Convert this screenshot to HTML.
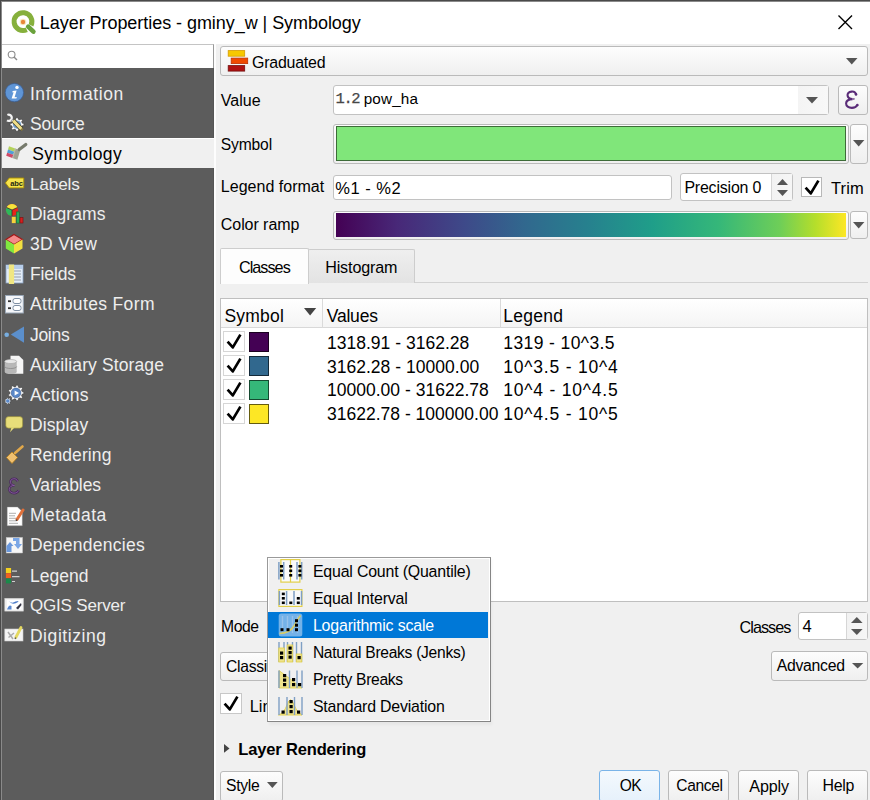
<!DOCTYPE html><html><head><meta charset="utf-8"><style>
html,body{margin:0;padding:0;width:870px;height:800px;overflow:hidden;background:#f0f0f0;}
body{position:relative;font-family:"Liberation Sans",sans-serif;}
.t{position:absolute;line-height:0;white-space:pre;font-family:"Liberation Sans",sans-serif;}
svg{overflow:visible}
</style></head><body>
<div style="position:absolute;left:0px;top:0px;width:870px;height:44px;background:#fff"></div>
<div style="position:absolute;left:0px;top:0px;width:870px;height:1px;background:#4a4a4a"></div>
<div style="position:absolute;left:0px;top:1px;width:870px;height:1px;background:#8a8a8a"></div>
<div style="position:absolute;left:0px;top:0px;width:1px;height:800px;background:#4a4a4a"></div>
<div style="position:absolute;left:1px;top:1px;width:1px;height:799px;background:#8a8a8a"></div>
<svg style="position:absolute;left:10px;top:9px" width="27" height="26" viewBox="0 0 27 26">
<path d="M16.76 20.67 A8.9 8.9 0 1 1 21.07 16.36" fill="none" stroke="#86b03c" stroke-width="5"/>
<path d="M18.2 17.6 L23.4 22.6" stroke="#6aa23c" stroke-width="4.6" stroke-linecap="round"/>
<circle cx="13" cy="13" r="3.3" fill="#f4dc9a" opacity="0.6"/>
<circle cx="13" cy="13" r="2.2" fill="#e8883a"/>
</svg>
<div class="t" style="left:39.80px;top:22.96px;font-size:18px;color:#000;font-weight:normal;letter-spacing:-0.049px;">Layer Properties - gminy_w &#124; Symbology</div>
<svg style="position:absolute;left:838px;top:15px" width="15" height="15" viewBox="0 0 15 15"><path d="M0.5 0.5 L14 14 M14 0.5 L0.5 14" stroke="#000" stroke-width="1.4"/></svg>
<div style="position:absolute;left:2px;top:44px;width:212px;height:24px;background:#fff;border-top:1px solid #c4c4c4;border-right:1px solid #9a9a9a;box-sizing:border-box"></div>
<svg style="position:absolute;left:7px;top:50px" width="12" height="12" viewBox="0 0 12 12"><circle cx="4.6" cy="4.6" r="3.4" fill="none" stroke="#8a8a8a" stroke-width="1.1"/><path d="M7 7 L10 10" stroke="#8a8a8a" stroke-width="1.4"/></svg>
<div style="position:absolute;left:2px;top:68px;width:212px;height:732px;background:#5c5c5c"></div>
<div style="position:absolute;left:213px;top:68px;width:1px;height:732px;background:#555"></div>
<div style="position:absolute;left:214px;top:44px;width:2px;height:756px;background:#fdfdfd"></div>
<div style="position:absolute;left:2px;top:138px;width:212px;height:30px;background:#f0f0f0;border-top:1px solid #fff;box-sizing:border-box"></div>
<div class="t" style="left:29.90px;top:93.64px;font-size:17.5px;color:#eeeeee;font-weight:normal;letter-spacing:0.575px;">Information</div>
<div class="t" style="left:29.90px;top:123.76px;font-size:17.5px;color:#eeeeee;font-weight:normal;letter-spacing:-0.131px;">Source</div>
<div class="t" style="left:32.20px;top:153.88px;font-size:17.5px;color:#000;font-weight:normal;letter-spacing:0.365px;">Symbology</div>
<div class="t" style="left:29.90px;top:184.11px;font-size:17.18px;color:#eeeeee;font-weight:normal;letter-spacing:-0.125px;">Labels</div>
<div class="t" style="left:29.90px;top:214.12px;font-size:17.5px;color:#eeeeee;font-weight:normal;letter-spacing:0.087px;">Diagrams</div>
<div class="t" style="left:29.90px;top:244.24px;font-size:17.5px;color:#eeeeee;font-weight:normal;letter-spacing:0.340px;">3D View</div>
<div class="t" style="left:29.90px;top:274.36px;font-size:17.5px;color:#eeeeee;font-weight:normal;letter-spacing:-0.097px;">Fields</div>
<div class="t" style="left:29.90px;top:304.48px;font-size:17.5px;color:#eeeeee;font-weight:normal;letter-spacing:0.355px;">Attributes Form</div>
<div class="t" style="left:29.90px;top:334.60px;font-size:17.5px;color:#eeeeee;font-weight:normal;letter-spacing:-0.265px;">Joins</div>
<div class="t" style="left:29.90px;top:364.72px;font-size:17.5px;color:#eeeeee;font-weight:normal;letter-spacing:0.106px;">Auxiliary Storage</div>
<div class="t" style="left:29.90px;top:394.84px;font-size:17.5px;color:#eeeeee;font-weight:normal;letter-spacing:0.202px;">Actions</div>
<div class="t" style="left:29.90px;top:424.96px;font-size:17.5px;color:#eeeeee;font-weight:normal;letter-spacing:0.152px;">Display</div>
<div class="t" style="left:29.90px;top:455.08px;font-size:17.5px;color:#eeeeee;font-weight:normal;letter-spacing:0.094px;">Rendering</div>
<div class="t" style="left:29.90px;top:485.20px;font-size:17.5px;color:#eeeeee;font-weight:normal;letter-spacing:-0.059px;">Variables</div>
<div class="t" style="left:29.90px;top:515.32px;font-size:17.5px;color:#eeeeee;font-weight:normal;letter-spacing:0.490px;">Metadata</div>
<div class="t" style="left:29.90px;top:545.44px;font-size:17.5px;color:#eeeeee;font-weight:normal;letter-spacing:0.264px;">Dependencies</div>
<div class="t" style="left:29.90px;top:575.56px;font-size:17.5px;color:#eeeeee;font-weight:normal;letter-spacing:0.039px;">Legend</div>
<div class="t" style="left:29.90px;top:605.84px;font-size:17.03px;color:#eeeeee;font-weight:normal;letter-spacing:-0.176px;">QGIS Server</div>
<div class="t" style="left:29.90px;top:635.80px;font-size:17.5px;color:#eeeeee;font-weight:normal;letter-spacing:0.578px;">Digitizing</div>
<svg style="position:absolute;left:2px;top:80px" width="28" height="28" viewBox="0 0 28 28">
<circle cx="12.4" cy="12.6" r="9.2" fill="#5f95d6" stroke="#3c5f94" stroke-width="0.8"/>
<circle cx="15.0" cy="7.4" r="1.7" fill="#fff"/>
<path d="M10.6 11 L14.6 10.6 L12.6 17.2 L14.8 17 L14.4 18.4 L9.6 18.6 L11.6 12.2 L10.4 12.4 Z" fill="#fff"/>
</svg>
<svg style="position:absolute;left:2px;top:110px" width="28" height="28" viewBox="0 0 28 28">
<path d="M5.4 5.0 A3.1 3.1 0 1 1 5.0 10.4" fill="none" stroke="#f4f4f4" stroke-width="2.3"/>
<path d="M9.2 9.6 L12 12.4" stroke="#f4f4f4" stroke-width="2.2"/>
<polygon points="20.25,13.24 21.84,13.58 21.84,15.42 20.25,15.76 19.60,17.32 20.49,18.69 19.19,19.99 17.82,19.10 16.26,19.75 15.92,21.34 14.08,21.34 13.74,19.75 12.18,19.10 10.81,19.99 9.51,18.69 10.40,17.32 9.75,15.76 8.16,15.42 8.16,13.58 9.75,13.24 10.40,11.68 9.51,10.31 10.81,9.01 12.18,9.90 13.74,9.25 14.08,7.66 15.92,7.66 16.26,9.25 17.82,9.90 19.19,9.01 20.49,10.31 19.60,11.68" fill="#fbfbfb" stroke="#333" stroke-width="0.5"/>
<circle cx="15" cy="14.6" r="4.1" fill="#7aa4d0"/>
<path d="M11 10.4 L19.6 19.2" stroke="#3a3a2a" stroke-width="4.6" stroke-linecap="butt"/>
<path d="M11.2 10.6 L19.4 19.0" stroke="#eedd88" stroke-width="3.2" stroke-linecap="butt"/>
<path d="M19.4 19.0 L20.6 20.2" stroke="#8a7a3a" stroke-width="2.4"/>
</svg>
<svg style="position:absolute;left:2px;top:140px" width="28" height="28" viewBox="0 0 28 28"><polygon points="7.00,6.20 13.16,8.40 12.21,11.66 6.05,9.46" fill="#b4d25a"/><polygon points="6.05,9.46 12.21,11.66 11.28,14.83 5.12,12.63" fill="#4f9fd8"/><polygon points="5.12,12.63 11.28,14.83 10.36,18.00 4.20,15.80" fill="#cf4a68"/><polygon points="13.16,8.40 18.20,10.20 15.40,19.80 10.36,18.00" fill="#9ea292"/><polygon points="13.16,8.40 13.94,8.68 11.14,18.28 10.36,18.00" fill="#b9bcae"/><path d="M17.2 9.6 L23.8 4.4" stroke="#767a6c" stroke-width="3.2" stroke-linecap="round"/></svg>
<svg style="position:absolute;left:2px;top:170px" width="28" height="28" viewBox="0 0 28 28">
<path d="M3.4 12.9 L7.2 8 L21.8 8 L21.8 17.9 L7.2 17.9 Z" fill="#f6e34c" stroke="#a88c00" stroke-width="0.9"/>
<text x="8.2" y="15.6" font-family="Liberation Sans" font-weight="bold" font-size="7.6" fill="#2a2a10" letter-spacing="-0.2">abc</text>
</svg>
<svg style="position:absolute;left:2px;top:200px" width="28" height="28" viewBox="0 0 28 28">
<circle cx="10" cy="10" r="6" fill="#e8241a"/>
<path d="M10 10 L4.5 7.5 A6 6 0 0 1 15.5 7.5 Z" fill="#f7e43a"/>
<path d="M10 10 L4.5 7.5 A6 6 0 0 0 10 16 Z" fill="#2eb85a"/>
<path d="M10 10 L4.5 7.5 M10 10 L15.5 7.5 M10 10 L10 16" stroke="#333" stroke-width="0.8"/>
<rect x="9.8" y="16.8" width="3.9" height="6.3" fill="#f6d23a"/>
<rect x="14.4" y="11.9" width="3.1" height="11.2" fill="#2aac58" stroke="#1d6a35" stroke-width="0.6"/>
<rect x="18" y="17.5" width="3" height="5.5" fill="#d41f1f" stroke="#7a1010" stroke-width="0.6"/>
</svg>
<svg style="position:absolute;left:2px;top:231px" width="28" height="28" viewBox="0 0 28 28">
<path d="M12 3.5 L20.5 8.5 L12 13.5 L3.8 8.5 Z" fill="#f48a8a" stroke="#a01818" stroke-width="1.1"/>
<path d="M3.8 8.5 L12 13.5 L12 22.5 L3.8 17.5 Z" fill="#80e840"/>
<path d="M20.5 8.5 L12 13.5 L12 22.5 L20.5 17.5 Z" fill="#f2e040"/>
</svg>
<svg style="position:absolute;left:2px;top:261px" width="28" height="28" viewBox="0 0 28 28">
<rect x="4" y="4" width="17" height="18" fill="#e2ecf8" stroke="#8aa4c4" stroke-width="0.8"/>
<rect x="4" y="4" width="17" height="4" fill="#b7cdea"/>
<path d="M12 10 H19 M12 13 H19 M12 16 H19 M12 19 H19" stroke="#8c96a4" stroke-width="0.9"/>
<rect x="6.8" y="3.5" width="5.3" height="19.5" fill="#f0e682"/>
</svg>
<svg style="position:absolute;left:2px;top:291px" width="28" height="28" viewBox="0 0 28 28">
<rect x="3.5" y="4.5" width="17.8" height="17.5" fill="#f4f6fa" stroke="#9aa8b8" stroke-width="1"/>
<rect x="11" y="7.5" width="8" height="5" rx="2" fill="#fff" stroke="#8090a4" stroke-width="1"/>
<rect x="11" y="14.5" width="8" height="5" rx="2" fill="#fff" stroke="#8090a4" stroke-width="1"/>
<rect x="6" y="9.3" width="3" height="1.8" fill="#333"/>
<rect x="6" y="16.3" width="3" height="1.8" fill="#333"/>
</svg>
<svg style="position:absolute;left:2px;top:321px" width="28" height="28" viewBox="0 0 28 28">
<circle cx="4.7" cy="13.8" r="2.3" fill="#78aee0"/>
<path d="M8.8 13.6 L22 5.6 L22 21.7 Z" fill="#5b8fcc"/>
</svg>
<svg style="position:absolute;left:2px;top:351px" width="28" height="28" viewBox="0 0 28 28">
<path d="M8.5 4.8 H17 L21.3 9 V22.7 H8.5 Z" fill="#f6f6f6"/>
<ellipse cx="8.7" cy="10.5" rx="6" ry="2" fill="#e6e6e6"/>
<path d="M2.7 10.5 V21 A6 2 0 0 0 14.7 21 V10.5 Z" fill="#b8b8b8"/>
<path d="M2.7 15.5 A6 2 0 0 0 14.7 15.5" stroke="#888" stroke-width="0.8" fill="none"/>
<ellipse cx="8.7" cy="10.5" rx="6" ry="2" fill="#e8e8e8" stroke="#999" stroke-width="0.5"/>
</svg>
<svg style="position:absolute;left:2px;top:381px" width="28" height="28" viewBox="0 0 28 28"><polygon points="20.06,10.61 21.75,10.98 21.75,12.82 20.06,13.19 19.47,14.81 20.53,16.17 19.34,17.59 17.82,16.79 16.32,17.65 16.25,19.37 14.44,19.69 13.78,18.10 12.08,17.80 10.93,19.07 9.33,18.15 9.85,16.51 8.74,15.19 7.04,15.42 6.41,13.68 7.86,12.76 7.86,11.04 6.41,10.12 7.04,8.38 8.74,8.61 9.85,7.29 9.33,5.65 10.93,4.73 12.08,6.00 13.78,5.70 14.44,4.11 16.25,4.43 16.32,6.15 17.82,7.01 19.34,6.21 20.53,7.63 19.47,8.99" fill="#fafafa" stroke="#333" stroke-width="0.5"/>
<circle cx="14" cy="11.9" r="4.8" fill="#5a88c8" stroke="#3a5a90" stroke-width="0.6"/>
<path d="M12.6 9.4 L17 11.9 L12.6 14.4 Z" fill="#fff"/>
<polygon points="8.31,19.31 9.16,19.48 9.16,20.52 8.31,20.69 7.90,21.53 8.30,22.31 7.49,22.95 6.82,22.39 5.92,22.60 5.56,23.39 4.55,23.16 4.57,22.29 3.84,21.71 3.00,21.92 2.55,20.99 3.24,20.46 3.24,19.54 2.55,19.01 3.00,18.08 3.84,18.29 4.57,17.71 4.55,16.84 5.56,16.61 5.92,17.40 6.82,17.61 7.49,17.05 8.30,17.69 7.90,18.47" fill="#dde6f2" stroke="#333" stroke-width="0.5"/>
<circle cx="5.8" cy="20" r="1.8" fill="#5a88c8"/>
</svg>
<svg style="position:absolute;left:2px;top:411px" width="28" height="28" viewBox="0 0 28 28">
<rect x="3.7" y="5.6" width="17" height="11.6" rx="3" fill="#e8de7a" stroke="#8a8230" stroke-width="0.6"/>
<path d="M9.5 16.5 L8 21.3 L12.5 16.5 Z" fill="#e8de7a"/>
</svg>
<svg style="position:absolute;left:2px;top:441px" width="28" height="28" viewBox="0 0 28 28">
<path d="M13 12 L20.5 5.5" stroke="#e2a84a" stroke-width="2.6" stroke-linecap="round"/>
<path d="M4.5 16.5 L10 11 L15.5 16.5 L10 22.5 Z" fill="#f0c070" stroke="#b8801a" stroke-width="0.8"/>
</svg>
<svg style="position:absolute;left:2px;top:472px" width="28" height="28" viewBox="0 0 28 28">
<g transform="translate(6.3,6.2) scale(0.83,0.885)">
<path d="M11.2 3.6 C10.5 1.2 8.5 0.4 6.6 0.6 C3.6 0.9 2.2 2.8 2.6 4.8 C3 6.8 5 8 7.5 8.1 C4 8.2 1.2 9.8 1.1 12.4 C1 15.2 3.6 16.9 6.8 16.9 C9.6 16.9 11.6 15.6 12.6 13.8" fill="none" stroke="#4a2a5c" stroke-width="2.8"/>
<path d="M11.2 3.6 C10.5 1.2 8.5 0.4 6.6 0.6 C3.6 0.9 2.2 2.8 2.6 4.8 C3 6.8 5 8 7.5 8.1 C4 8.2 1.2 9.8 1.1 12.4 C1 15.2 3.6 16.9 6.8 16.9 C9.6 16.9 11.6 15.6 12.6 13.8" fill="none" stroke="#8d62a8" stroke-width="1.1" opacity="0.85"/>
</g>
</svg>
<svg style="position:absolute;left:2px;top:502px" width="28" height="28" viewBox="0 0 28 28">
<path d="M5.2 5 H15.5 L20.3 9.5 V23.8 H5.2 Z" fill="#fff" stroke="#888" stroke-width="0.4"/>
<path d="M7 11.3 H14 M7 13.8 H13 M7 16.3 H14 M7 18.8 H14 M7 21.3 H16" stroke="#9a9a9a" stroke-width="0.8"/>
<path d="M21 8 L15 17.5" stroke="#e0703a" stroke-width="3" stroke-linecap="round"/>
<path d="M15 17.5 L14.2 19" stroke="#444" stroke-width="1.4"/>
</svg>
<svg style="position:absolute;left:2px;top:532px" width="28" height="28" viewBox="0 0 28 28">
<rect x="4.2" y="5.4" width="16.4" height="15.6" fill="#f6f6f6" stroke="#bbb" stroke-width="0.5"/>
<path d="M4.5 14 L8 10 L11.5 14 H9.5 V20 H4.5 Z" fill="#6a98dc"/>
<path d="M11 6 H17.5 V12 H20 L16 17 L12 12 H14 V9 H11 Z" fill="#7aa6e6"/>
</svg>
<svg style="position:absolute;left:2px;top:562px" width="28" height="28" viewBox="0 0 28 28">
<rect x="3.9" y="6" width="5.2" height="5" fill="#f2d020"/>
<rect x="3.9" y="11.2" width="5.2" height="5" fill="#f06020"/>
<rect x="3.9" y="16.4" width="5.2" height="5" fill="#1a8a4a"/>
<path d="M10 9.2 H15 M10 14.7 H17.5 M10 19.5 H13" stroke="#cfcfcf" stroke-width="1.2"/>
</svg>
<svg style="position:absolute;left:2px;top:592px" width="28" height="28" viewBox="0 0 28 28">
<rect x="2.8" y="6.3" width="18.6" height="12.8" fill="#f2f2f2" stroke="#ccc" stroke-width="0.6"/>
<path d="M5 8 H19.5 V17.5 H5 Z" fill="#fff"/>
<path d="M6.5 9 Q10 12 13.5 9.5 L16.5 9 L16 10 Q12 13 9 11 Z" fill="#4a7ac8"/>
<path d="M5 17.5 Q7 12 9.5 14 L9.5 17.5 Z" fill="#5a88d0"/>
<path d="M14 16 L19 11 L19.5 13 L16 17.5 Z" fill="#334"/>
</svg>
<svg style="position:absolute;left:2px;top:622px" width="28" height="28" viewBox="0 0 28 28">
<rect x="2.8" y="7" width="18.2" height="12" fill="#f4f4f4" stroke="#ccc" stroke-width="0.6"/>
<path d="M6 10 L11 17 M6.5 15.5 L12 11" stroke="#aaa" stroke-width="1.5"/>
<path d="M19 5.5 L13.8 15.5" stroke="#e4d860" stroke-width="2.8" stroke-linecap="round"/>
<path d="M13.8 15.5 L13 17" stroke="#555" stroke-width="1.3"/>
</svg>
<div style="position:absolute;left:220px;top:46px;width:648px;height:30px;background:linear-gradient(#fdfdfd,#efefef);border:1px solid #bababa;border-radius:3px;box-sizing:border-box"></div>
<svg style="position:absolute;left:226px;top:49px" width="24" height="24" viewBox="0 0 24 24">
<rect x="2.2" y="1.6" width="16.5" height="5.6" fill="#f7c800" stroke="#d49a00" stroke-width="0.8"/>
<rect x="5.2" y="9.1" width="16.5" height="5.5" fill="#f04a00" stroke="#c03000" stroke-width="0.8"/>
<rect x="2.2" y="16.6" width="16.5" height="5.5" fill="#b01010" stroke="#701010" stroke-width="0.8"/>
</svg>
<div class="t" style="left:252.00px;top:62.98px;font-size:15.94px;color:#000;font-weight:normal;letter-spacing:-0.215px;">Graduated</div>
<svg style="position:absolute;left:845.5px;top:57.5px" width="11.5" height="6.5"><path d="M0 0 L11.5 0 L5.75 6.5 Z" fill="#555"/></svg>
<div class="t" style="left:220.80px;top:100.76px;font-size:16px;color:#000;font-weight:normal;letter-spacing:0.016px;">Value</div>
<div style="position:absolute;left:333px;top:85px;width:496px;height:30px;background:#fff;border:1px solid #c2c2c2;border-radius:3px;box-sizing:border-box"></div>
<div style="position:absolute;left:798px;top:86px;width:30px;height:28px;background:linear-gradient(90deg,#f4f4f4,#f8f8f8)"></div>
<svg style="position:absolute;left:806px;top:96.6px" width="12" height="6.4"><path d="M0 0 L12 0 L6.0 6.4 Z" fill="#555"/></svg>
<div class="t" style="left:335.60px;top:98.93px;font-size:15.5px;color:#474747;font-weight:normal;font-family:'Liberation Mono',monospace;letter-spacing:-1.5px;-webkit-text-stroke:0.25px #474747;">1.2</div>
<div class="t" style="left:363.70px;top:99.30px;font-size:15.3px;color:#000;font-weight:normal;letter-spacing:0.141px;">pow_ha</div>
<div style="position:absolute;left:838px;top:85px;width:30px;height:30px;background:linear-gradient(#fdfdfd,#efefef);border:1px solid #bababa;border-radius:3px;box-sizing:border-box"></div>
<svg style="position:absolute;left:845px;top:90.5px" width="15" height="18" viewBox="0 0 15 18"><path d="M11.2 3.6 C10.5 1.2 8.5 0.4 6.6 0.6 C3.6 0.9 2.2 2.8 2.6 4.8 C3 6.8 5 8 7.5 8.1 C4 8.2 1.2 9.8 1.1 12.4 C1 15.2 3.6 16.9 6.8 16.9 C9.6 16.9 11.6 15.6 12.6 13.8" fill="none" stroke="#5a2c78" stroke-width="2.1"/><circle cx="11.0" cy="3.4" r="1.3" fill="#5a2c78"/><circle cx="12.4" cy="14.0" r="1.2" fill="#5a2c78"/><path d="M7.5 8.1 L9.6 7.9" stroke="#5a2c78" stroke-width="1.2"/></svg>
<div class="t" style="left:220.80px;top:144.58px;font-size:15.64px;color:#000;font-weight:normal;letter-spacing:-0.155px;">Symbol</div>
<div style="position:absolute;left:333px;top:124px;width:516px;height:40px;background:linear-gradient(#fdfdfd,#efefef);border:1px solid #bababa;border-radius:3px;box-sizing:border-box"></div>
<div style="position:absolute;left:336px;top:126px;width:510px;height:35px;background:#80e67a;border:1px solid #3d6b38;box-sizing:border-box"></div>
<div style="position:absolute;left:850px;top:124px;width:18px;height:40px;background:linear-gradient(#fdfdfd,#efefef);border:1px solid #bababa;border-radius:3px;box-sizing:border-box"></div>
<svg style="position:absolute;left:853px;top:140.4px" width="11.4" height="6.6"><path d="M0 0 L11.4 0 L5.7 6.6 Z" fill="#555"/></svg>
<div class="t" style="left:220.80px;top:187.06px;font-size:16px;color:#000;font-weight:normal;letter-spacing:0.018px;">Legend format</div>
<div style="position:absolute;left:333px;top:175px;width:339px;height:25px;background:#fff;border:1px solid #c2c2c2;border-radius:3px;box-sizing:border-box"></div>
<div class="t" style="left:335.20px;top:187.88px;font-size:16.5px;color:#000;font-weight:normal;letter-spacing:0.523px;">%1 - %2</div>
<div style="position:absolute;left:680px;top:173px;width:113px;height:28px;background:#fff;border:1px solid #c2c2c2;border-radius:3px;box-sizing:border-box"></div>
<div style="position:absolute;left:771px;top:174px;width:21px;height:26px;background:linear-gradient(90deg,#f2f2f2,#f6f6f6);border-left:1px solid #d6d6d6;box-sizing:border-box"></div>
<svg style="position:absolute;left:776.5px;top:178.5px" width="11" height="6"><path d="M0 6 L11 6 L5.5 0 Z" fill="#555"/></svg>
<svg style="position:absolute;left:776.5px;top:189.5px" width="11" height="6"><path d="M0 0 L11 0 L5.5 6 Z" fill="#555"/></svg>
<div class="t" style="left:684.40px;top:187.98px;font-size:15.93px;color:#000;font-weight:normal;letter-spacing:-0.182px;">Precision 0</div>
<div style="position:absolute;left:801px;top:177px;width:21px;height:20px;background:#fff;border:1px solid #b8b8b8;box-sizing:border-box"></div>
<svg style="position:absolute;left:803px;top:179px" width="18" height="17" viewBox="0 0 18 17"><path d="M2.6 8.6 L7.8 14.4 L15.4 1.6" fill="none" stroke="#000" stroke-width="2.7" stroke-linejoin="round"/></svg>
<div class="t" style="left:830.90px;top:187.78px;font-size:16.5px;color:#000;font-weight:normal;letter-spacing:0.175px;">Trim</div>
<div class="t" style="left:220.80px;top:224.86px;font-size:16px;color:#000;font-weight:normal;letter-spacing:-0.060px;">Color ramp</div>
<div style="position:absolute;left:333px;top:211px;width:516px;height:29px;background:linear-gradient(#fdfdfd,#efefef);border:1px solid #bababa;border-radius:3px;box-sizing:border-box"></div>
<div style="position:absolute;left:336px;top:213px;width:510px;height:24px;background:linear-gradient(90deg,#440154 0%,#482878 12%,#3e4989 25%,#31688e 37%,#26828e 50%,#1f9e89 62%,#35b779 75%,#6ece58 87%,#b5de2b 94%,#fde725 100%)"></div>
<div style="position:absolute;left:850px;top:211px;width:18px;height:28px;background:linear-gradient(#fdfdfd,#efefef);border:1px solid #bababa;border-radius:3px;box-sizing:border-box"></div>
<svg style="position:absolute;left:853px;top:222px" width="11.4" height="6.6"><path d="M0 0 L11.4 0 L5.7 6.6 Z" fill="#555"/></svg>
<div style="position:absolute;left:220px;top:282px;width:648px;height:1px;background:#d2d2d2"></div>
<div style="position:absolute;left:308px;top:249px;width:106.5px;height:34px;background:linear-gradient(#efefef,#e3e3e3);border:1px solid #cdcdcd;border-bottom:none;border-radius:2px 2px 0 0;box-sizing:border-box"></div>
<div style="position:absolute;left:220px;top:248px;width:89px;height:36px;background:#fdfdfd;border:1px solid #cdcdcd;border-bottom:none;border-radius:2px 2px 0 0;box-sizing:border-box"></div>
<div class="t" style="left:238.90px;top:266.99px;font-size:16.2px;color:#000;font-weight:normal;letter-spacing:-0.95px;">Classes</div>
<div class="t" style="left:325.20px;top:267.41px;font-size:16.13px;color:#000;font-weight:normal;letter-spacing:-0.138px;">Histogram</div>
<div style="position:absolute;left:220px;top:298px;width:648px;height:304px;background:#fff;border:1px solid #bfbfbf;box-sizing:border-box"></div>
<div style="position:absolute;left:221px;top:299px;width:646px;height:29px;background:linear-gradient(#ffffff,#f4f4f4);border-bottom:1px solid #d8d8d8;box-sizing:border-box"></div>
<div style="position:absolute;left:322px;top:299px;width:1px;height:29px;background:#dadada"></div>
<div style="position:absolute;left:500px;top:299px;width:1px;height:29px;background:#dadada"></div>
<svg style="position:absolute;left:304px;top:308px" width="12.2" height="7.4"><path d="M0 0 L12.2 0 L6.1 7.4 Z" fill="#444"/></svg>
<div class="t" style="left:224.40px;top:315.54px;font-size:17.5px;color:#000;font-weight:normal;letter-spacing:0.208px;">Symbol</div>
<div class="t" style="left:326.80px;top:315.54px;font-size:17.5px;color:#000;font-weight:normal;letter-spacing:-0.224px;">Values</div>
<div class="t" style="left:503.30px;top:315.54px;font-size:17.5px;color:#000;font-weight:normal;letter-spacing:0.259px;">Legend</div>
<div style="position:absolute;left:223px;top:331px;width:22px;height:21px;background:#fff;border:1px solid #d6d6d6;box-sizing:border-box"></div>
<svg style="position:absolute;left:225px;top:333px" width="18" height="17" viewBox="0 0 18 17"><path d="M2.6 8.6 L7.8 14.4 L15.4 1.6" fill="none" stroke="#000" stroke-width="2.7" stroke-linejoin="round"/></svg>
<div style="position:absolute;left:249px;top:331.5px;width:20.2px;height:20.5px;background:#440154;box-shadow:inset 0 0 0 1px rgba(0,0,0,0.6)"></div>
<div class="t" style="left:326.90px;top:342.64px;font-size:17.5px;color:#000;font-weight:normal;letter-spacing:0.020px;">1318.91 - 3162.28</div>
<div class="t" style="left:503.30px;top:342.64px;font-size:17.5px;color:#000;font-weight:normal;letter-spacing:0.400px;">1319 - 10^3.5</div>
<div style="position:absolute;left:223px;top:355px;width:22px;height:21px;background:#fff;border:1px solid #d6d6d6;box-sizing:border-box"></div>
<svg style="position:absolute;left:225px;top:357px" width="18" height="17" viewBox="0 0 18 17"><path d="M2.6 8.6 L7.8 14.4 L15.4 1.6" fill="none" stroke="#000" stroke-width="2.7" stroke-linejoin="round"/></svg>
<div style="position:absolute;left:249px;top:355.5px;width:20.2px;height:20.5px;background:#31688e;box-shadow:inset 0 0 0 1px rgba(0,0,0,0.6)"></div>
<div class="t" style="left:326.90px;top:366.54px;font-size:17.5px;color:#000;font-weight:normal;letter-spacing:0.029px;">3162.28 - 10000.00</div>
<div class="t" style="left:503.30px;top:366.54px;font-size:17.5px;color:#000;font-weight:normal;letter-spacing:0.786px;">10^3.5 - 10^4</div>
<div style="position:absolute;left:223px;top:379px;width:22px;height:21px;background:#fff;border:1px solid #d6d6d6;box-sizing:border-box"></div>
<svg style="position:absolute;left:225px;top:381px" width="18" height="17" viewBox="0 0 18 17"><path d="M2.6 8.6 L7.8 14.4 L15.4 1.6" fill="none" stroke="#000" stroke-width="2.7" stroke-linejoin="round"/></svg>
<div style="position:absolute;left:249px;top:379.5px;width:20.2px;height:20.5px;background:#35b779;box-shadow:inset 0 0 0 1px rgba(0,0,0,0.6)"></div>
<div class="t" style="left:326.90px;top:390.24px;font-size:17.5px;color:#000;font-weight:normal;letter-spacing:0.020px;">10000.00 - 31622.78</div>
<div class="t" style="left:503.30px;top:390.24px;font-size:17.5px;color:#000;font-weight:normal;letter-spacing:0.786px;">10^4 - 10^4.5</div>
<div style="position:absolute;left:223px;top:403px;width:22px;height:21px;background:#fff;border:1px solid #d6d6d6;box-sizing:border-box"></div>
<svg style="position:absolute;left:225px;top:405px" width="18" height="17" viewBox="0 0 18 17"><path d="M2.6 8.6 L7.8 14.4 L15.4 1.6" fill="none" stroke="#000" stroke-width="2.7" stroke-linejoin="round"/></svg>
<div style="position:absolute;left:249px;top:403.5px;width:20.2px;height:20.5px;background:#fde725;box-shadow:inset 0 0 0 1px rgba(0,0,0,0.6)"></div>
<div class="t" style="left:326.90px;top:414.34px;font-size:17.5px;color:#000;font-weight:normal;letter-spacing:0.017px;">31622.78 - 100000.00</div>
<div class="t" style="left:503.30px;top:414.34px;font-size:17.5px;color:#000;font-weight:normal;letter-spacing:0.786px;">10^4.5 - 10^5</div>
<div class="t" style="left:221.00px;top:626.66px;font-size:15.7px;color:#000;font-weight:normal;letter-spacing:-0.427px;">Mode</div>
<div class="t" style="left:739.50px;top:626.59px;font-size:16.2px;color:#000;font-weight:normal;letter-spacing:-0.95px;">Classes</div>
<div style="position:absolute;left:798px;top:612px;width:70px;height:28px;background:#fff;border:1px solid #c2c2c2;border-radius:3px;box-sizing:border-box"></div>
<div style="position:absolute;left:846px;top:613px;width:21px;height:26px;background:linear-gradient(90deg,#f2f2f2,#f6f6f6);border-left:1px solid #d6d6d6;box-sizing:border-box"></div>
<svg style="position:absolute;left:850.7px;top:617.4px" width="11.6" height="6"><path d="M0 6 L11.6 6 L5.8 0 Z" fill="#555"/></svg>
<svg style="position:absolute;left:850.7px;top:629px" width="11.6" height="6"><path d="M0 0 L11.6 0 L5.8 6 Z" fill="#555"/></svg>
<div class="t" style="left:802.40px;top:626.48px;font-size:16.5px;color:#000;font-weight:normal;">4</div>
<div style="position:absolute;left:220px;top:652px;width:120px;height:29px;background:linear-gradient(#fdfdfd,#efefef);border:1px solid #bababa;border-radius:3px;box-sizing:border-box"></div>
<div class="t" style="left:226.00px;top:667.17px;font-size:15.67px;color:#000;font-weight:normal;letter-spacing:-0.265px;">Classify</div>
<div style="position:absolute;left:771px;top:651px;width:97px;height:30px;background:linear-gradient(#fdfdfd,#efefef);border:1px solid #bababa;border-radius:3px;box-sizing:border-box"></div>
<div class="t" style="left:776.70px;top:666.13px;font-size:15.8px;color:#000;font-weight:normal;letter-spacing:-0.285px;">Advanced</div>
<svg style="position:absolute;left:851.5px;top:662.8px" width="11.3" height="5.6"><path d="M0 0 L11.3 0 L5.65 5.6 Z" fill="#555"/></svg>
<div style="position:absolute;left:220px;top:693px;width:22px;height:21px;background:#fff;border:1px solid #c8c8c8;box-sizing:border-box"></div>
<svg style="position:absolute;left:222px;top:695px" width="18" height="17" viewBox="0 0 18 17"><path d="M2.6 8.6 L7.8 14.4 L15.4 1.6" fill="none" stroke="#000" stroke-width="2.7" stroke-linejoin="round"/></svg>
<div class="t" style="left:249.70px;top:706.28px;font-size:16.5px;color:#000;font-weight:normal;">Link class boundaries</div>
<svg style="position:absolute;left:224px;top:744.4px" width="6" height="9" viewBox="0 0 6 9"><path d="M0 0 L5.5 4.4 L0 8.8 Z" fill="#444"/></svg>
<div class="t" style="left:238.30px;top:749.08px;font-size:16.5px;color:#000;font-weight:bold;letter-spacing:-0.158px;">Layer Rendering</div>
<div style="position:absolute;left:220px;top:771px;width:63px;height:31px;background:linear-gradient(#fdfdfd,#efefef);border:1px solid #bababa;border-radius:3px;box-sizing:border-box"></div>
<div class="t" style="left:226.00px;top:785.86px;font-size:15.71px;color:#000;font-weight:normal;letter-spacing:-0.282px;">Style</div>
<svg style="position:absolute;left:266.7px;top:781.5px" width="10.7" height="5.9"><path d="M0 0 L10.7 0 L5.35 5.9 Z" fill="#555"/></svg>
<div style="position:absolute;left:599px;top:770px;width:61px;height:32px;background:linear-gradient(#f4f9fd,#e6f1fb);border:1px solid #7ab4e8;border-radius:3px;box-sizing:border-box"></div>
<div style="position:absolute;left:668px;top:770px;width:61px;height:32px;background:linear-gradient(#fdfdfd,#efefef);border:1px solid #bababa;border-radius:3px;box-sizing:border-box"></div>
<div style="position:absolute;left:738px;top:770px;width:61px;height:32px;background:linear-gradient(#fdfdfd,#efefef);border:1px solid #bababa;border-radius:3px;box-sizing:border-box"></div>
<div style="position:absolute;left:807px;top:770px;width:61px;height:32px;background:linear-gradient(#fdfdfd,#efefef);border:1px solid #bababa;border-radius:3px;box-sizing:border-box"></div>
<div class="t" style="left:619.80px;top:785.79px;font-size:15.6px;color:#000;font-weight:normal;letter-spacing:-0.6px;">OK</div>
<div class="t" style="left:676.30px;top:785.80px;font-size:15.58px;color:#000;font-weight:normal;letter-spacing:-0.363px;">Cancel</div>
<div class="t" style="left:749.30px;top:785.61px;font-size:16.12px;color:#000;font-weight:normal;letter-spacing:-0.156px;">Apply</div>
<div class="t" style="left:822.40px;top:785.68px;font-size:15.93px;color:#000;font-weight:normal;letter-spacing:-0.254px;">Help</div>
<div style="position:absolute;left:269px;top:559px;width:223px;height:166px;background:rgba(0,0,0,0.035);filter:blur(1.5px)"></div>
<div style="position:absolute;left:267px;top:556.5px;width:223.5px;height:165.5px;background:#f0f0f0;border:1px solid #9a9a9a;border-right-color:#858585;border-bottom-color:#858585;box-sizing:border-box;box-shadow:inset 1px 1px 0 #fff, inset -1px -1px 0 #fff"></div>
<div style="position:absolute;left:268px;top:612px;width:220px;height:26.4px;background:#0078d7"></div>
<div class="t" style="left:312.90px;top:572.09px;font-size:15.91px;color:#000;font-weight:normal;letter-spacing:-0.184px;">Equal Count (Quantile)</div>
<div class="t" style="left:312.90px;top:599.09px;font-size:15.9px;color:#000;font-weight:normal;letter-spacing:-0.181px;">Equal Interval</div>
<div class="t" style="left:312.90px;top:625.87px;font-size:15.95px;color:#fff;font-weight:normal;letter-spacing:-0.172px;">Logarithmic scale</div>
<div class="t" style="left:312.90px;top:652.69px;font-size:15.6px;color:#000;font-weight:normal;letter-spacing:-0.278px;">Natural Breaks (Jenks)</div>
<div class="t" style="left:312.90px;top:679.79px;font-size:15.61px;color:#000;font-weight:normal;letter-spacing:-0.284px;">Pretty Breaks</div>
<div class="t" style="left:312.90px;top:706.69px;font-size:15.9px;color:#000;font-weight:normal;letter-spacing:-0.193px;">Standard Deviation</div>
<svg style="position:absolute;left:276px;top:558px" width="28" height="26" viewBox="0 0 28 26">
<rect x="4.9" y="1.6" width="19" height="22.5" fill="#fafafa" stroke="#e2cf48" stroke-width="1.2"/>
<path d="M14.5 1.6 V24.1" stroke="#e2cf48" stroke-width="1.2"/>
<path d="M2.9 4 V21.5 M7.7 4 V21.5 M21 4 V21.5 M25.7 4 V21.5" stroke="#7f9fc4" stroke-width="1.5"/>
<rect x="4" y="7" width="3" height="2.6" fill="#000"/><rect x="4" y="11.5" width="3" height="2.6" fill="#000"/><rect x="4" y="16" width="3" height="2.6" fill="#000"/><rect x="13.2" y="7" width="3" height="2.6" fill="#000"/><rect x="13.2" y="11.5" width="3" height="2.6" fill="#000"/><rect x="13.2" y="16" width="3" height="2.6" fill="#000"/><rect x="22.4" y="7" width="3" height="2.6" fill="#000"/><rect x="22.4" y="11.5" width="3" height="2.6" fill="#000"/><rect x="22.4" y="16" width="3" height="2.6" fill="#000"/></svg>
<svg style="position:absolute;left:276px;top:585px" width="28" height="26" viewBox="0 0 28 26">
<rect x="2.9" y="4.6" width="23" height="16.8" fill="#fafafa" stroke="#e2cf48" stroke-width="1.2"/>
<path d="M3.4 6 V20 M10.6 6 V20 M18 6 V20 M25.5 6 V20" stroke="#7f9fc4" stroke-width="1.5"/>
<rect x="5.8" y="7.6" width="3" height="2.6" fill="#000"/><rect x="5.8" y="12" width="3" height="2.6" fill="#000"/><rect x="5.8" y="16.5" width="3" height="2.6" fill="#000"/><rect x="13.3" y="16.5" width="3" height="2.6" fill="#000"/><rect x="20.8" y="12" width="3" height="2.6" fill="#000"/><rect x="20.8" y="16.5" width="3" height="2.6" fill="#000"/></svg>
<svg style="position:absolute;left:276px;top:612px" width="28" height="26" viewBox="0 0 28 26">
<rect x="2.7" y="1.4" width="23.6" height="23.2" rx="2.5" fill="#74b2e8"/>
<path d="M6.5 4 V21 M11.5 4 V21 M16.5 4 V21 M21.5 4 V21" stroke="#98c2ea" stroke-width="1.4"/>
<path d="M3.5 21.5 Q14 21 18 14 Q21 8 24.5 3.5" fill="none" stroke="#d8cc68" stroke-width="1.6"/>
<rect x="4.5" y="16.2" width="3" height="3" fill="#000"/><rect x="10.5" y="16.2" width="3" height="3" fill="#000"/><rect x="19" y="7.2" width="3" height="3" fill="#000"/><rect x="19" y="11.7" width="3" height="3" fill="#000"/><rect x="19" y="16.2" width="3" height="3" fill="#000"/></svg>
<svg style="position:absolute;left:276px;top:639px" width="28" height="26" viewBox="0 0 28 26">
<path d="M3 3 V23 M8 3 V23 M11.5 3 V23 M16.5 3 V23 M20.5 3 V23 M25.5 3 V23" stroke="#7f9fc4" stroke-width="1.4"/>
<rect x="2.8" y="9" width="5.5" height="14" fill="#efe38c" stroke="#e2cf48" stroke-width="0.8"/>
<rect x="11.2" y="6" width="5.5" height="17" fill="#efe38c" stroke="#e2cf48" stroke-width="0.8"/>
<rect x="20.3" y="15" width="5.5" height="8" fill="#efe38c" stroke="#e2cf48" stroke-width="0.8"/>
<rect x="4" y="12.5" width="3.2" height="3.2" fill="#000"/><rect x="4" y="17" width="3.2" height="3.2" fill="#000"/><rect x="12.5" y="7.5" width="3.2" height="3.2" fill="#000"/><rect x="12.5" y="12" width="3.2" height="3.2" fill="#000"/><rect x="12.5" y="16.5" width="3.2" height="3.2" fill="#000"/><rect x="21.5" y="17" width="3.2" height="3.2" fill="#000"/></svg>
<svg style="position:absolute;left:276px;top:666px" width="28" height="26" viewBox="0 0 28 26">
<path d="M3 4.5 L26 22 L3 22 Z" fill="#efe38c" stroke="#e2cf48" stroke-width="0.8"/>
<path d="M3 4.5 V22 M13.5 4.5 V22 M21 4.5 V22 M26 4.5 V22" stroke="#7f9fc4" stroke-width="1.4"/>
<rect x="7" y="8" width="3.2" height="3.2" fill="#000"/><rect x="7" y="12.5" width="3.2" height="3.2" fill="#000"/><rect x="7" y="17" width="3.2" height="3.2" fill="#000"/><rect x="16" y="12" width="3.2" height="3.2" fill="#000"/><rect x="16" y="17" width="3.2" height="3.2" fill="#000"/><rect x="22" y="17" width="3.2" height="3.2" fill="#000"/></svg>
<svg style="position:absolute;left:276px;top:693px" width="28" height="26" viewBox="0 0 28 26">
<path d="M2.5 22 Q8 20 11 12 Q14.5 1.5 18 12 Q21 20 26 22 Z" fill="#efe38c" stroke="#e2cf48" stroke-width="0.9"/>
<path d="M3 4 V22 M11 4 V22 M18.5 4 V22 M26 4 V22" stroke="#7f9fc4" stroke-width="1.4"/>
<rect x="5.5" y="17.5" width="3.2" height="3.2" fill="#000"/><rect x="13.5" y="7" width="3.2" height="3.2" fill="#000"/><rect x="13.5" y="12" width="3.2" height="3.2" fill="#000"/><rect x="13.5" y="17" width="3.2" height="3.2" fill="#000"/><rect x="21" y="17.5" width="3.2" height="3.2" fill="#000"/></svg>
</body></html>
